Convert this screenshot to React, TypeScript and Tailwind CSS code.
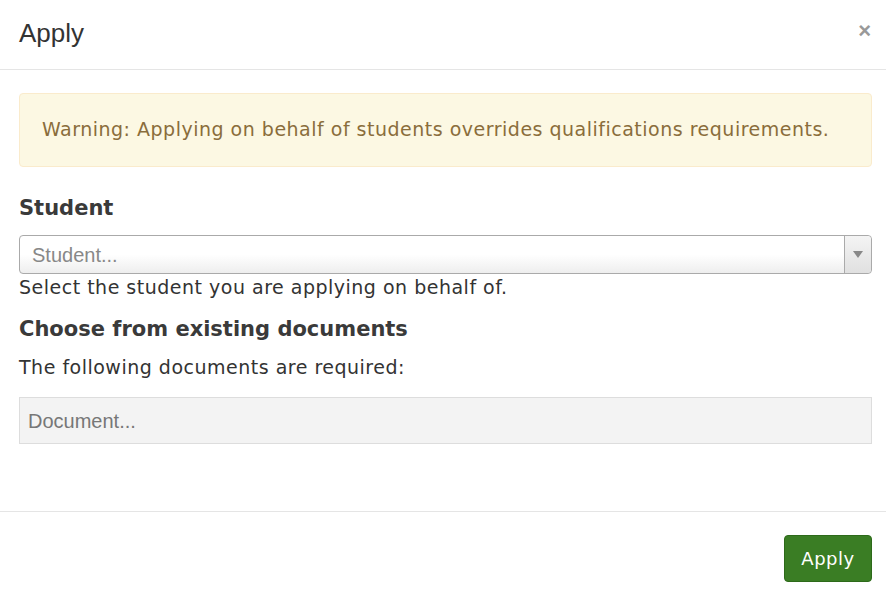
import React from "react";

export default function App() {
  return (
    <div className="w-[886px] h-[600px] bg-white text-[#333] overflow-hidden" style={{ fontFamily: '"DejaVu Sans", "Liberation Sans", sans-serif' }}>
      <div className="h-[70px] border-b border-[#e5e5e5] flex items-center justify-between pl-[19px] pr-[15px]">
        <h4 className="text-[26px] font-light text-[#333] leading-none -mt-[4px]" style={{ fontFamily: '"Liberation Sans", sans-serif' }}>Apply</h4>
        <span className="text-[22px] font-bold text-[#999] leading-none -mt-[8px]" style={{ fontFamily: '"Liberation Sans", sans-serif' }}>×</span>
      </div>
      <div className="pl-[19px] pr-[14px] pt-[23px] h-[441px]">
        <div className="h-[74px] bg-[#fcf8e3] border border-[#faebcc] rounded-[4px] text-[#8a6d3b] text-[19px] tracking-[0.5px] flex items-center pl-[22px] pb-[2px]">
          Warning: Applying on behalf of students overrides qualifications requirements.
        </div>
        <div className="mt-[26px] text-[21px] font-bold leading-[30px] text-[#3a3a3a]">Student</div>
        <div className="mt-[12px] h-[39px] border border-[#aaa] rounded-[4px] flex bg-gradient-to-b from-white from-50% to-[#eee]">
          <div className="flex-1 flex items-center pl-[12px] text-[20px] text-[#888]" style={{ fontFamily: '"Liberation Sans", sans-serif' }}>Student...</div>
          <div className="w-[27px] border-l border-[#aaa] bg-gradient-to-b from-[#f4f4f4] to-[#e0e0e0] rounded-r-[4px] flex items-center justify-center">
            <div className="w-0 h-0 border-l-[5px] border-r-[5px] border-t-[7px] border-l-transparent border-r-transparent border-t-[#888]" />
          </div>
        </div>
        <div className="text-[19px] tracking-[0.5px] leading-[26px] mt-[0px]">Select the student you are applying on behalf of.</div>
        <div className="mt-[14px] text-[21px] font-bold leading-[30px] text-[#3a3a3a]">Choose from existing documents</div>
        <div className="mt-[10px] text-[19px] tracking-[0.5px] leading-[26px]">The following documents are required:</div>
        <div className="mt-[17px] h-[47px] bg-[#f3f3f3] border border-[#ddd] flex items-center pl-[8px] text-[20px] text-[#777]" style={{ fontFamily: '"Liberation Sans", sans-serif' }}>Document...</div>
      </div>
      <div className="border-t border-[#e5e5e5] flex justify-end pr-[14px] pt-[23px]">
        <button className="h-[47px] w-[88px] bg-[#3a7d24] border border-[#2d6a1a] rounded-[4px] text-white text-[18px] tracking-[0.5px]">Apply</button>
      </div>
    </div>
  );
}
